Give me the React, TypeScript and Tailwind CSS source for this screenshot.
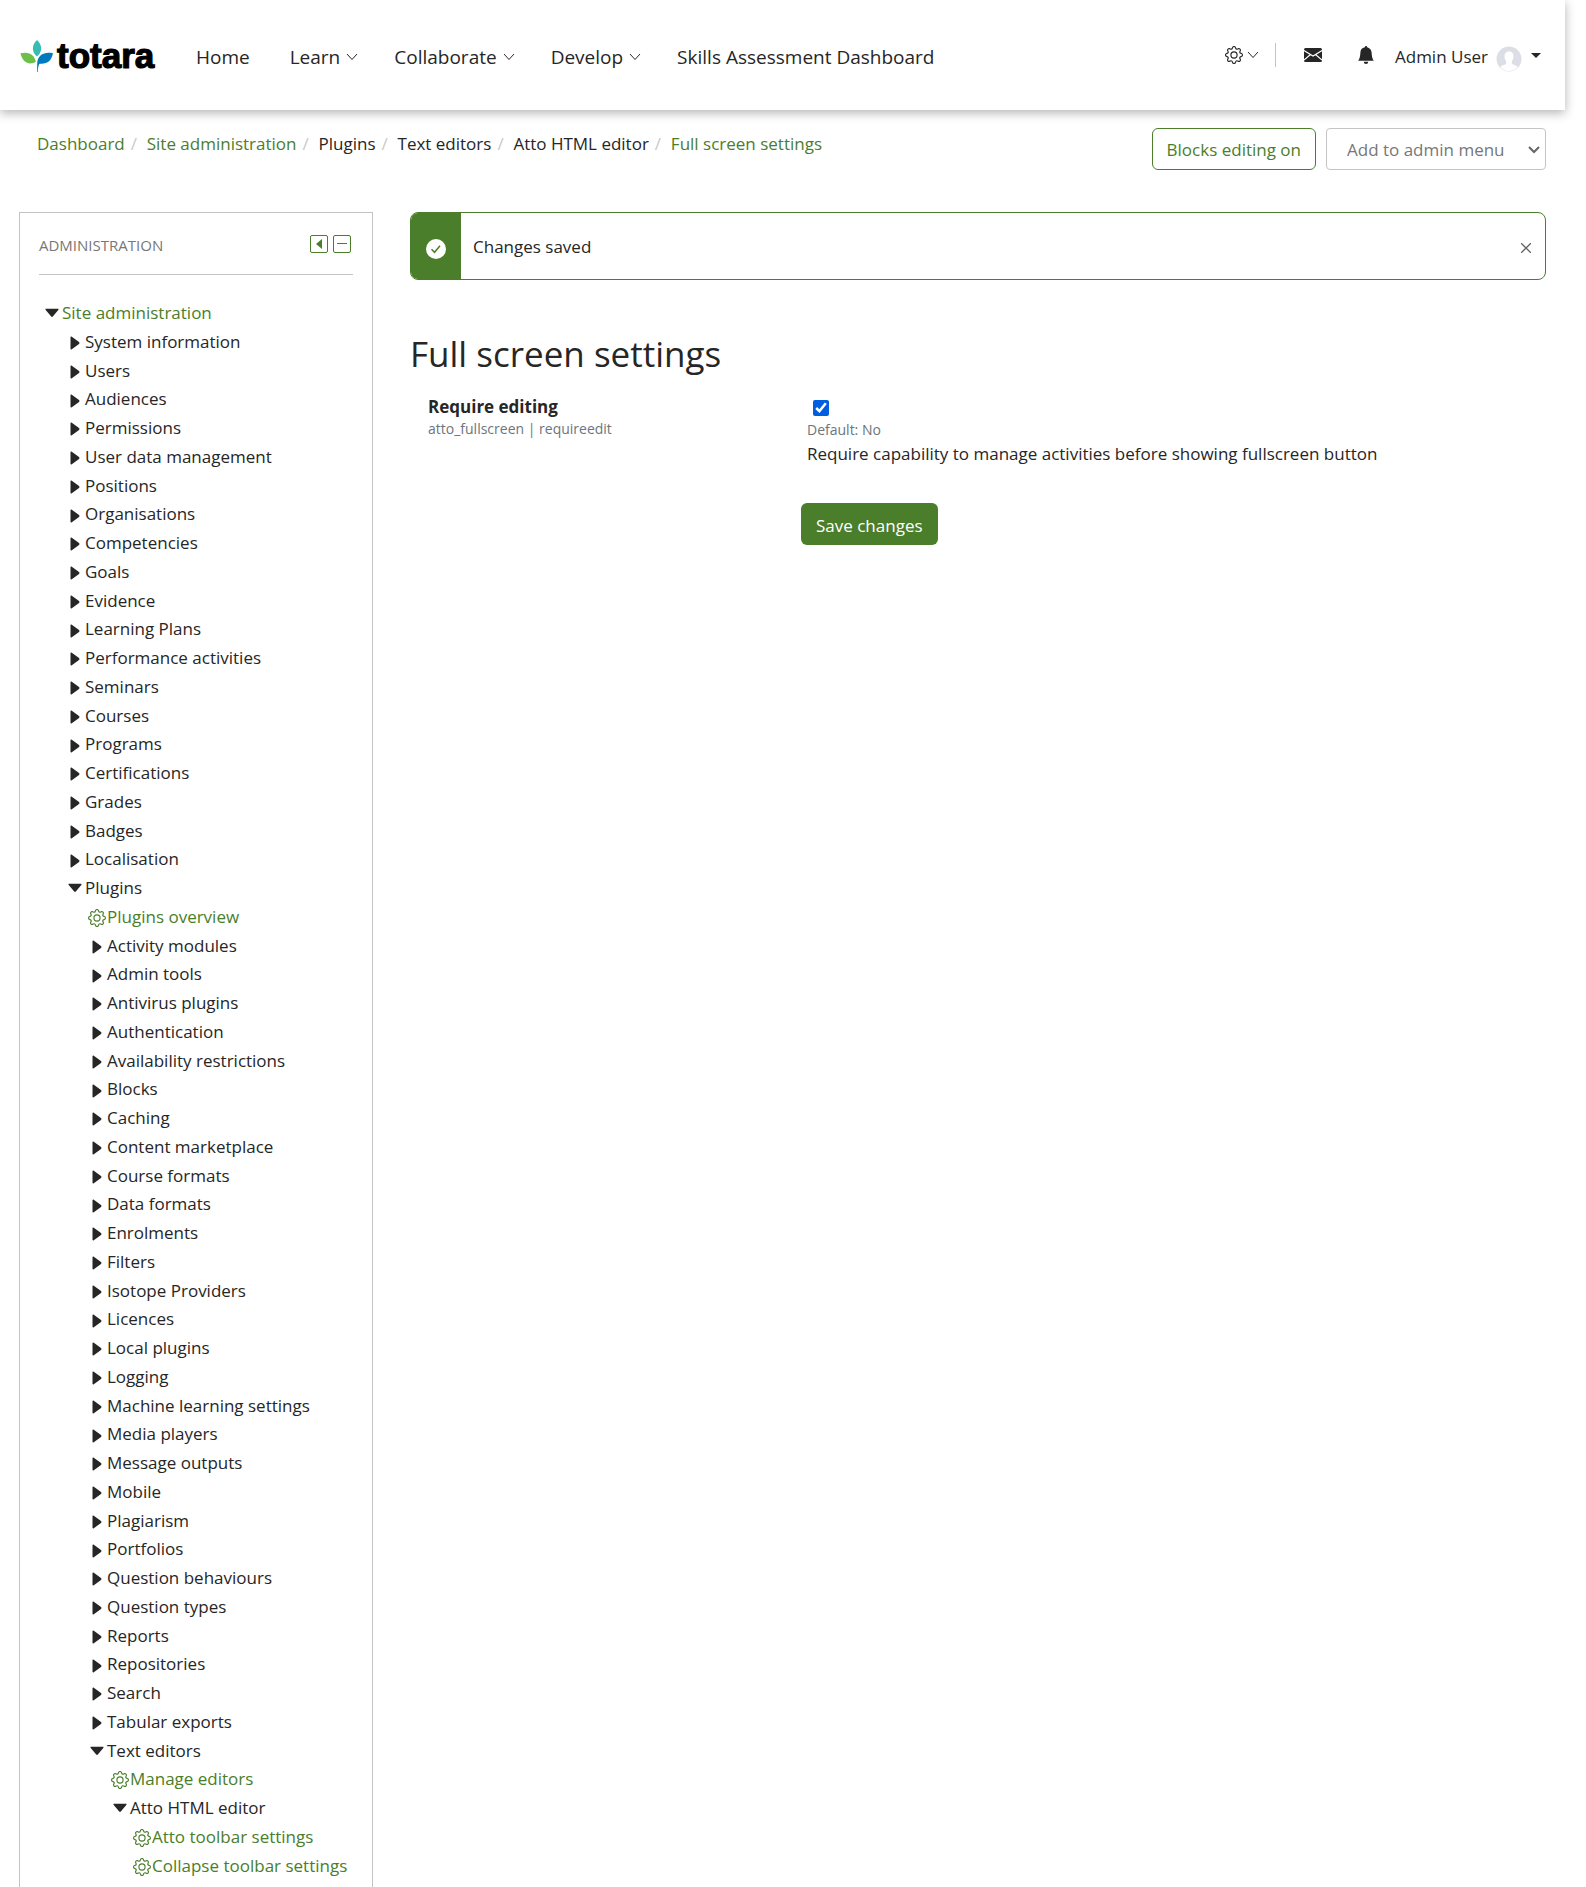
import React from "react";
import { BsGear, BsBellFill } from "react-icons/bs";

type Kind = "open" | "closed" | "leaf";
type Row = { level: number; kind: Kind; label: string; link?: boolean };

const closed = (level: number, labels: string[]): Row[] =>
  labels.map((label) => ({ level, kind: "closed", label }));

const rows: Row[] = [
  { level: 0, kind: "open", label: "Site administration", link: true },
  ...closed(1, [
    "System information", "Users", "Audiences", "Permissions", "User data management",
    "Positions", "Organisations", "Competencies", "Goals", "Evidence", "Learning Plans",
    "Performance activities", "Seminars", "Courses", "Programs", "Certifications",
    "Grades", "Badges", "Localisation",
  ]),
  { level: 1, kind: "open", label: "Plugins" },
  { level: 2, kind: "leaf", label: "Plugins overview", link: true },
  ...closed(2, [
    "Activity modules", "Admin tools", "Antivirus plugins", "Authentication",
    "Availability restrictions", "Blocks", "Caching", "Content marketplace",
    "Course formats", "Data formats", "Enrolments", "Filters", "Isotope Providers",
    "Licences", "Local plugins", "Logging", "Machine learning settings", "Media players",
    "Message outputs", "Mobile", "Plagiarism", "Portfolios", "Question behaviours",
    "Question types", "Reports", "Repositories", "Search", "Tabular exports",
  ]),
  { level: 2, kind: "open", label: "Text editors" },
  { level: 3, kind: "leaf", label: "Manage editors", link: true },
  { level: 3, kind: "open", label: "Atto HTML editor" },
  { level: 4, kind: "leaf", label: "Atto toolbar settings", link: true },
  { level: 4, kind: "leaf", label: "Collapse toolbar settings", link: true },
];

const indents = ["pl-0", "pl-[23px]", "pl-[45px]", "pl-[68px]", "pl-[90px]"];

function TreeIcon({ kind }: { kind: Kind }) {
  if (kind === "leaf") return <BsGear className="mt-[2px] size-[18px]" />;
  if (kind === "open")
    return (
      <svg viewBox="0 0 14 10" className="mt-px h-[10px] w-[14px] text-[#262626]" fill="currentColor">
        <path d="M1.2.8h11.6c.8 0 1 .7.5 1.2L7.8 8.6c-.5.6-1.1.6-1.6 0L.7 2C.2 1.500.4.8 1.200.8z" />
      </svg>
    );
  return (
    <svg viewBox="0 0 10 14" className="mt-[3px] h-[14px] w-[10px]" fill="currentColor">
      <path d="M.5 1.200C.5.4 1.300.2 1.800.7l7.200 5.400c.6.5.6 1.300 0 1.800L1.800 13.300c-.5.5-1.300.3-1.300-.5z" />
    </svg>
  );
}

function Chevron() {
  return (
    <svg viewBox="0 0 12 8" className="h-2 w-3" fill="none" stroke="currentColor">
      <path d="M1 1l5 5.500L11 1" />
    </svg>
  );
}

function Logo() {
  return (
    <svg viewBox="0 0 144 40" className="h-10 w-36" role="img" aria-label="totara">
      <path d="M17 4c5.500 5 5.500 12 0 16.500C11.500 16 11.500 9 17 4z" fill="#35bdb2" />
      <path d="M.5 17.300c7-2 14 .5 15.300 8.700C9.500 29.500 2.500 27 .5 17.300z" fill="#6cc04a" />
      <path d="M33 17.300c-9-1.800-15.500 2-15.800 10.200L17 36h.7c.1-4 .6-6.300 1.800-8.300C27 28.500 31.500 25 33 17.300z" fill="#0079bd" />
      <text x="37" y="32" fontFamily="Liberation Sans, Arial, sans-serif" fontWeight="700" fontSize="35" stroke="#000" strokeWidth="1.200">
        totara
      </text>
    </svg>
  );
}

const nav = [
  { label: "Home" },
  { label: "Learn", menu: true },
  { label: "Collaborate", menu: true },
  { label: "Develop", menu: true },
  { label: "Skills Assessment Dashboard" },
];

const crumbs = [
  { label: "Dashboard", link: true },
  { label: "Site administration", link: true },
  { label: "Plugins" },
  { label: "Text editors" },
  { label: "Atto HTML editor" },
  { label: "Full screen settings", link: true },
];

export default function App() {
  return (
    <div className="flex min-h-screen flex-col bg-white pr-[21px] font-['Open_Sans',sans-serif] text-[17px] leading-7 text-[#262626]">
      <header className="flex h-[110px] items-center bg-white pr-6 pl-5 shadow-[0_3px_10px_rgba(0,0,0,0.3)]">
        <a href="#" className="mt-[2px]"><Logo /></a>
        <nav className="mt-1 ml-8 flex items-center text-[19px]">
          {nav.map((n) =>
            n.menu ? (
              <button key={n.label} type="button" className="mr-9 flex items-center gap-[6px] whitespace-nowrap">
                {n.label}
                <Chevron />
              </button>
            ) : (
              <a key={n.label} href="#" className="mr-10 whitespace-nowrap">{n.label}</a>
            )
          )}
        </nav>
        <div className="ml-auto flex items-center">
          <button type="button" aria-label="Settings" className="flex items-center gap-1">
            <BsGear className="size-[18px]" />
            <Chevron />
          </button>
          <span className="ml-4 h-6 w-px bg-[#c4c4c4]" />
          <button type="button" aria-label="Messages" className="ml-7">
            <svg viewBox="0 0 18 14" className="h-[14px] w-[18px]">
              <rect width="18" height="14" rx="1.500" fill="#262626" />
              <path d="M0 2.500L9 8l9-5.500M0 12l6.500-5.500M18 12l-6.500-5.500" fill="none" stroke="#fff" strokeWidth="1.100" />
            </svg>
          </button>
          <button type="button" aria-label="Notifications" className="ml-[35px]">
            <BsBellFill className="size-[18px]" />
          </button>
          <button type="button" className="ml-5 flex items-center whitespace-nowrap">
            <span className="mt-[3px]">Admin User</span>
            <svg viewBox="0 0 26 26" className="mt-2 ml-2 size-[26px]">
              <circle cx="13" cy="13" r="12.500" fill="#dbdfe5" />
              <path d="M13 5.500c3 0 4.600 2 4.500 5-.1 2-.8 3.500-1.700 4.500v2.500c1 1.500 4.200 1.500 6 3.500-2.400 2.700-5.400 4-8.800 4s-6.400-1.300-8.800-4c1.800-2 5-2 6-3.500V15c-.9-1-1.600-2.500-1.700-4.500-.1-3 1.500-5 4.500-5z" fill="#fff" />
            </svg>
            <svg viewBox="0 0 10 5" className="ml-[9px] h-[5px] w-[10px]"><path d="M0 0h10L5 5z" fill="#262626" /></svg>
          </button>
        </div>
      </header>

      <div className="flex items-start justify-between pt-[18px] pr-[19px] pl-[37px]">
        <nav aria-label="Breadcrumb">
          <ol className="flex pt-[2px] whitespace-nowrap">
            {crumbs.map((c, i) => (
              <li key={c.label} className="flex">
                {i > 0 && <span className="w-[22px] pl-[6px] text-[#c9c9c9]">/</span>}
                {c.link ? <a href="#" className="text-[#4a7e2b]">{c.label}</a> : c.label}
              </li>
            ))}
          </ol>
        </nav>
        <div className="flex gap-[10px]">
          <button type="button" className="h-[42px] rounded-md border border-[#4a7e2b] px-[14px] pt-[2px] whitespace-nowrap text-[#4a7e2b]">
            Blocks editing on
          </button>
          <div className="relative">
            <select aria-label="Add to admin menu" className="h-[42px] w-[220px] appearance-none rounded border border-[#c4c4c4] bg-white pt-[2px] pl-5 text-[#777]">
              <option>Add to admin menu</option>
            </select>
            <svg viewBox="0 0 12 8" className="pointer-events-none absolute top-[18px] right-[6px] h-2 w-3" fill="none" stroke="#666" strokeWidth="2">
              <path d="M1 1l5 5 5-5" />
            </svg>
          </div>
        </div>
      </div>

      <div className="mt-[42px] flex grow gap-[37px] px-[19px]">
        <aside className="w-[354px] shrink-0 border border-b-0 border-[#c4c4c4] px-[19px]">
          <div className="flex h-[62px] items-center justify-between border-b border-[#c4c4c4] pr-[2px]">
            <h2 className="mt-[2px] text-[15px] text-[#777]">ADMINISTRATION</h2>
            <div className="flex gap-[5px]">
              <button type="button" aria-label="Dock block" className="flex size-[18px] items-center justify-center rounded-[2px] border border-[#4a7e2b] text-[#4a7e2b]">
                <svg viewBox="0 0 6 10" className="h-[10px] w-[6px]"><path d="M6 0v10L0 5z" fill="currentColor" /></svg>
              </button>
              <button type="button" aria-label="Hide block" className="flex size-[18px] items-center justify-center rounded-[2px] border border-[#4a7e2b]">
                <span className="h-px w-[10px] bg-[#4a7e2b]" />
              </button>
            </div>
          </div>
          <ul className="mt-[23px] ml-[3px]">
            {rows.map((r) => (
              <li key={r.label} className={"flex h-[29px] items-center nth-[4n]:h-7 " + indents[r.level]}>
                {React.createElement(
                  r.link ? "a" : "button",
                  {
                    ...(r.link ? { href: "#" } : { type: "button" }),
                    className: r.link ? "flex items-center whitespace-nowrap text-[#4a7e2b]" : "flex items-center whitespace-nowrap",
                  },
                  <span className="flex w-5 justify-center"><TreeIcon kind={r.kind} /></span>,
                  <span>{r.label}</span>
                )}
              </li>
            ))}
          </ul>
        </aside>

        <main className="min-w-0 grow">
          <div role="status" className="flex h-[68px] overflow-hidden rounded-lg border border-[#4a7e2b]">
            <div className="flex w-[50px] items-center justify-center bg-[#4a7e2b]">
              <svg viewBox="0 0 20 20" className="mt-[6px] size-5">
                <circle cx="10" cy="10" r="10" fill="#fff" />
                <path d="M5.500 10.300l3 3 5.500-6.500" fill="none" stroke="#4a7e2b" strokeWidth="1.500" />
              </svg>
            </div>
            <p className="mt-[2px] ml-3 self-center">Changes saved</p>
            <button type="button" aria-label="Close" className="mr-[14px] ml-auto">
              <svg viewBox="0 0 10 10" className="mt-[4px] size-[10px]" stroke="#666" strokeWidth="1.300"><path d="M0 0l10 10M10 0L0 10" /></svg>
            </button>
          </div>

          <h1 className="mt-[50px] text-[35px] leading-[48px]">Full screen settings</h1>

          <form onSubmit={(e) => e.preventDefault()}>
            <div className="mt-[17px] flex pl-[18px]">
              <div className="w-[379px] shrink-0">
                <label htmlFor="requireedit" className="block leading-6 font-bold">Require editing</label>
                <p className="text-[14px] leading-5 text-[#6c757d]">atto_fullscreen | requireedit</p>
              </div>
              <div>
                <input id="requireedit" type="checkbox" defaultChecked className="mt-[5px] ml-[6px] block size-4 accent-[#005fe0]" />
                <p className="mt-1 text-[14px] leading-5 text-[#6c757d]">Default: No</p>
                <p className="leading-7">Require capability to manage activities before showing fullscreen button</p>
              </div>
            </div>
            <button type="submit" className="mt-[35px] ml-[391px] h-[42px] rounded-md bg-[#4a7e2b] px-[15px] pt-1 whitespace-nowrap text-white">
              Save changes
            </button>
          </form>
        </main>
      </div>
    </div>
  );
}
